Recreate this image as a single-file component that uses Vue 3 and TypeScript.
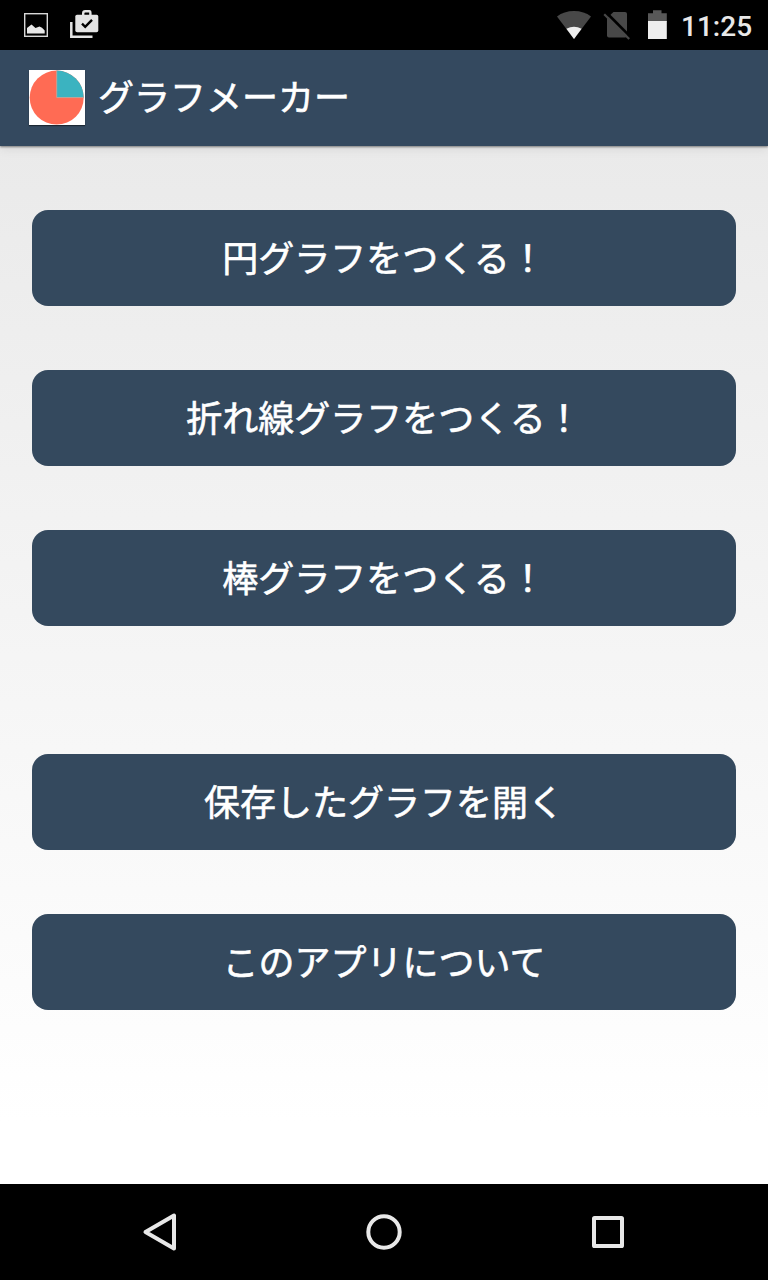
<script setup lang="ts">
interface MenuItem {
  id: string
  label: string
}

const graphItems: MenuItem[] = [
  { id: 'pie', label: '円グラフをつくる！' },
  { id: 'line', label: '折れ線グラフをつくる！' },
  { id: 'bar', label: '棒グラフをつくる！' },
]

const otherItems: MenuItem[] = [
  { id: 'open', label: '保存したグラフを開く' },
  { id: 'about', label: 'このアプリについて' },
]
</script>

<template>
  <div class="screen">
    <div class="status">
      <svg class="picture" width="24" height="24" viewBox="0 0 24 24">
        <rect x="0.7" y="0.7" width="22.6" height="22.6" fill="none" stroke="#d8d8d8" stroke-width="1.4" />
        <path d="M3 20.5V15L7.5 11.5L11.5 15L15.5 13.5L18 14.7L20.7 17.5V20.5Z" fill="#e8e8e8" />
      </svg>
      <svg class="store" width="30" height="30" viewBox="0 0 30 30">
        <path d="M1.3 12V26.7H22.5" fill="none" stroke="#e4e4e4" stroke-width="2.5" />
        <path d="M13.2 6V3.2Q13.2 1.2 15.2 1.2H16.4Q18.4 1.2 19.4 1.2Q20.4 1.2 20.4 3.2V6" fill="none" stroke="#e4e4e4" stroke-width="2.4" />
        <path d="M7 4.7H26.6Q28.3 4.7 28.3 6.4V20.5Q28.3 22.3 26.5 22.3H7.1Q5.3 22.3 5.3 20.5V6.4Q5.3 4.7 7 4.7Z" fill="#e4e4e4" />
        <path d="M12 13.7L15.2 16.8L22 9.8" fill="none" stroke="#000" stroke-width="2.4" />
      </svg>
      <div class="spacer"></div>
      <svg class="wifi" width="36" height="30" viewBox="0 0 36 30">
        <path d="M1 6.5Q8 1 18 1Q28 1 35 6.5L18 29Z" fill="#484848" />
        <path d="M10.4 18.8Q18 14.8 25.6 18.8L18 29Z" fill="#eee" />
      </svg>
      <svg class="sim" width="28" height="30" viewBox="0 0 28 30">
        <path d="M10.5 2H22Q24 2 24 4V25.5Q24 27.5 22 27.5H6Q4 27.5 4 25.5V8Z" fill="#484848" />
        <path d="M3.2 2.4L27.6 27" stroke="#000" stroke-width="2.8" />
        <path d="M1.2 4.2L26.2 29" stroke="#484848" stroke-width="2.2" />
      </svg>
      <svg class="battery" width="20" height="30" viewBox="0 0 20 30">
        <path d="M1 3.2H6V0.2H14.5V3.2H19.8V12H1Z" fill="#585858" />
        <rect x="1" y="11" width="18.8" height="18" fill="#eee" />
      </svg>
      <span class="time">11:25</span>
    </div>

    <header class="header">
      <svg class="logo" width="56" height="55" viewBox="0 0 56 55">
        <rect width="56" height="55" fill="#fff" />
        <circle cx="27.7" cy="27.6" r="27" fill="#ff6b54" />
        <path d="M27.7 27.6V0.6A27 27 0 0 1 54.7 27.6Z" fill="#3bb3c0" />
        <path d="M27.7 0.6V27.6H54.7" fill="none" stroke="#c5a69b" stroke-width="0.9" />
      </svg>
      <h1 class="title">グラフメーカー</h1>
    </header>

    <main class="content">
      <div class="group">
        <button v-for="item in graphItems" :key="item.id" class="button" type="button">{{ item.label }}</button>
      </div>
      <div class="group">
        <button v-for="item in otherItems" :key="item.id" class="button" type="button">{{ item.label }}</button>
      </div>
    </main>

    <nav class="nav">
      <svg width="48" height="48" viewBox="0 0 48 48">
        <path d="M38 7.5V40.5L9.5 24Z" />
      </svg>
      <svg width="48" height="48" viewBox="0 0 48 48">
        <circle cx="24" cy="24" r="15.7" />
      </svg>
      <svg width="48" height="48" viewBox="0 0 48 48">
        <rect x="10" y="10" width="28" height="28" rx="0.6" />
      </svg>
    </nav>
  </div>
</template>

<style>
body {
  margin: 0;
}
</style>

<style scoped>
.screen {
  width: 768px;
  height: 1280px;
  display: flex;
  flex-direction: column;
  overflow: hidden;
  font-family: 'Noto Sans CJK JP', sans-serif;
}

.status {
  height: 50px;
  flex: none;
  box-sizing: border-box;
  padding: 0 16px 0 24px;
  display: flex;
  align-items: center;
  background: #000;
}

.store {
  margin-left: 22px;
}

.spacer {
  flex: 1;
}

.sim {
  margin-left: 11px;
}

.battery {
  margin-left: 16px;
}

.time {
  width: 71px;
  margin-left: 14px;
  font: 500 28px/50px Roboto, sans-serif;
  color: #e8e8e8;
  padding-top: 3px;
  white-space: nowrap;
}

.header {
  height: 96px;
  flex: none;
  display: flex;
  align-items: flex-start;
  box-sizing: border-box;
  padding-left: 29px;
  background: #34495f;
  box-shadow: 0 1px 2px rgba(0, 0, 0, 0.45), 0 3px 10px rgba(0, 0, 0, 0.08);
  position: relative;
}

.logo {
  margin-top: 20px;
  box-shadow: 0 1px 1px rgba(0, 0, 0, 0.45);
}

.title {
  margin: 0 0 0 13px;
  font-size: 36px;
  line-height: 90px;
  font-weight: 400;
  color: #fff;
  -webkit-text-stroke: 0.6px #fff;
}

.content {
  flex: 1;
  display: flex;
  flex-direction: column;
  gap: 128px;
  padding: 64px 32px 0;
  background: linear-gradient(#eaeaea, #fff 94%);
}

.group {
  display: flex;
  flex-direction: column;
  gap: 64px;
}

.button {
  height: 96px;
  box-sizing: border-box;
  padding: 0 0 3px;
  border: 0;
  border-radius: 16px;
  background: #34495e;
  color: #fff;
  font-family: inherit;
  font-size: 36px;
  line-height: 93px;
  text-align: center;
  -webkit-text-stroke: 0.6px #fff;
}

.nav {
  height: 96px;
  flex: none;
  display: flex;
  align-items: center;
  justify-content: center;
  gap: 176px;
  background: #000;
}

.nav svg {
  fill: none;
  stroke: #e8e8e8;
  stroke-width: 4;
  stroke-linejoin: round;
}
</style>
